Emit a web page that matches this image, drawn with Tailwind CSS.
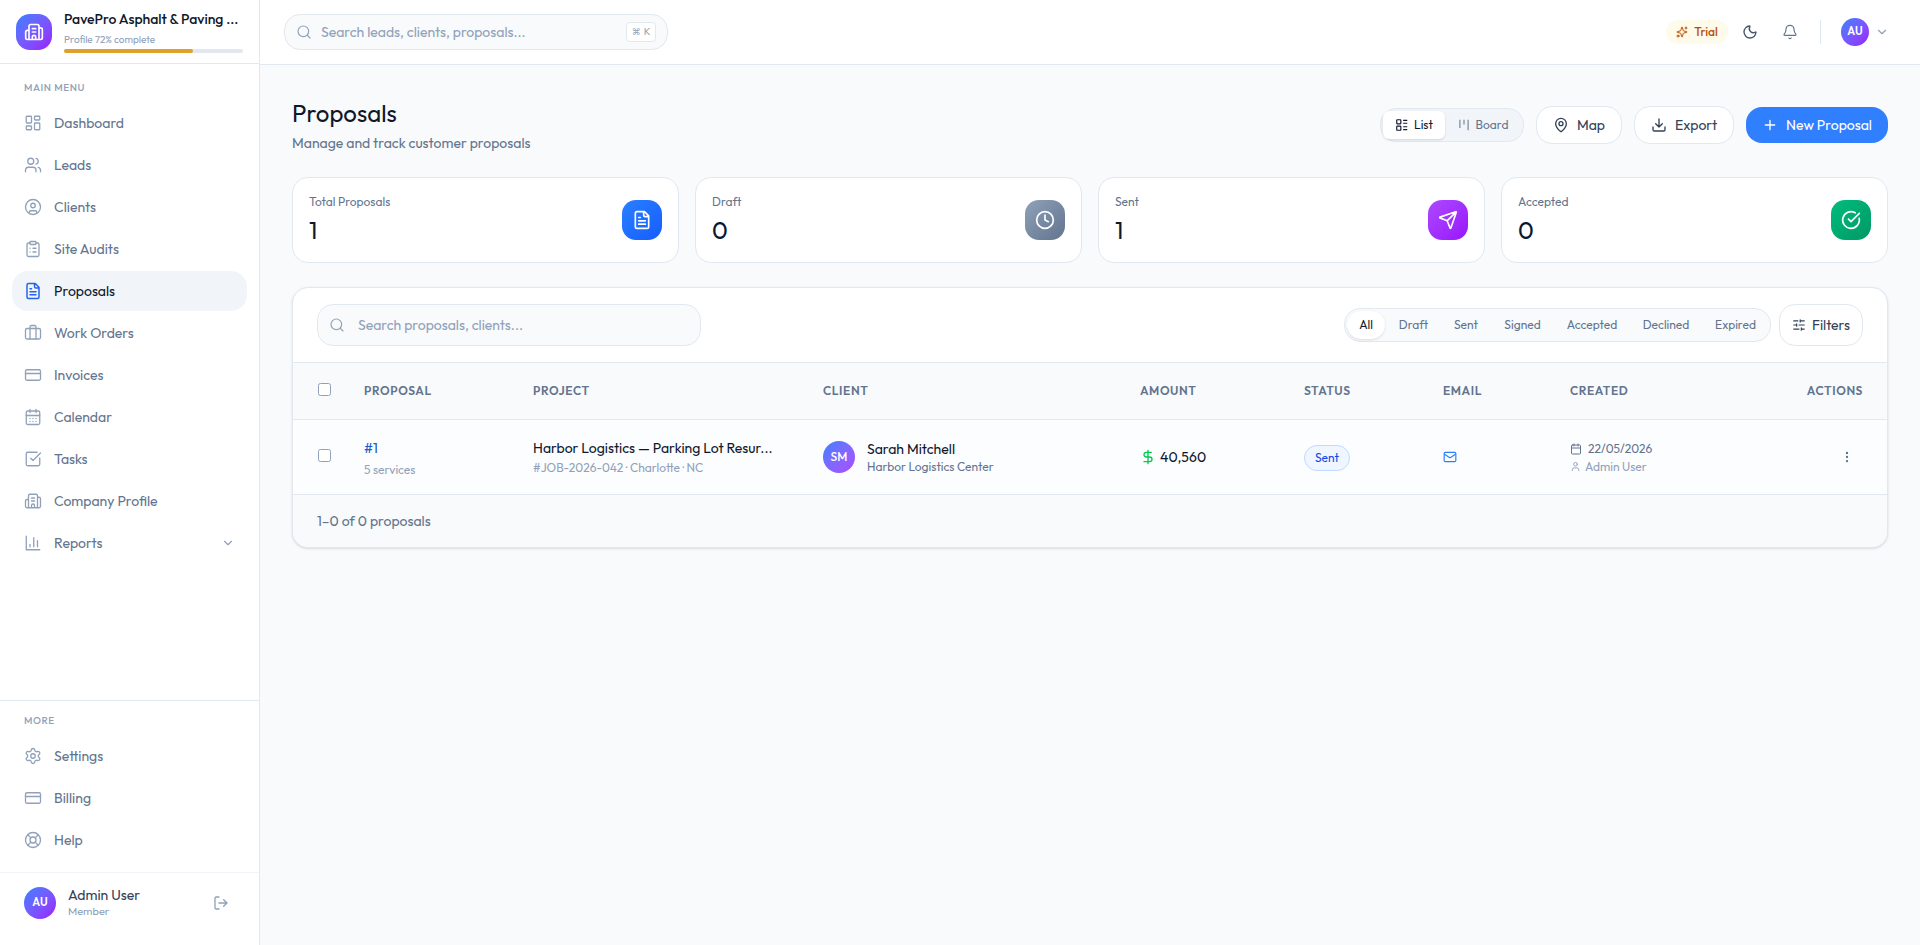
<!DOCTYPE html>
<html lang="en">

<head>
    <meta charset="UTF-8">
    <meta name="viewport" content="width=device-width, initial-scale=1.0">
    <title>Proposals</title>
    <script src="https://cdn.jsdelivr.net/npm/@tailwindcss/browser@4"></script>
</head>

<body class="bg-slate-50 flex h-[945px] overflow-hidden font-[Outfit,Lato,sans-serif] text-sm text-slate-900">

    <!-- Icon sprite -->
    <svg class="hidden">
        <symbol id="building" viewBox="0 0 24 24"><path d="M10 12h4M10 8h4M14 21v-3a2 2 0 0 0-4 0v3M6 10H4a2 2 0 0 0-2 2v7a2 2 0 0 0 2 2h16a2 2 0 0 0 2-2V9a2 2 0 0 0-2-2h-2M6 21V5a2 2 0 0 1 2-2h8a2 2 0 0 1 2 2v16" /></symbol>
        <symbol id="dashboard" viewBox="0 0 24 24"><rect x="3" y="3" width="7" height="9" rx="1" /><rect x="14" y="3" width="7" height="5" rx="1" /><rect x="14" y="12" width="7" height="9" rx="1" /><rect x="3" y="16" width="7" height="5" rx="1" /></symbol>
        <symbol id="users" viewBox="0 0 24 24"><path d="M16 21v-2a4 4 0 0 0-4-4H6a4 4 0 0 0-4 4v2M16 3.128a4 4 0 0 1 0 7.744M22 21v-2a4 4 0 0 0-3-3.87" /><circle cx="9" cy="7" r="4" /></symbol>
        <symbol id="user-circle" viewBox="0 0 24 24"><circle cx="12" cy="12" r="10" /><circle cx="12" cy="10" r="3" /><path d="M7 20.662V19a2 2 0 0 1 2-2h6a2 2 0 0 1 2 2v1.662" /></symbol>
        <symbol id="clipboard" viewBox="0 0 24 24"><rect x="8" y="2" width="8" height="4" rx="1" /><path d="M16 4h2a2 2 0 0 1 2 2v14a2 2 0 0 1-2 2H6a2 2 0 0 1-2-2V6a2 2 0 0 1 2-2h2M12 11h4M12 16h4M8 11h.01M8 16h.01" /></symbol>
        <symbol id="file" viewBox="0 0 24 24"><path d="M15 2H6a2 2 0 0 0-2 2v16a2 2 0 0 0 2 2h12a2 2 0 0 0 2-2V7ZM14 2v4a2 2 0 0 0 2 2h4M10 9H8M16 13H8M16 17H8" /></symbol>
        <symbol id="briefcase" viewBox="0 0 24 24"><path d="M16 20V4a2 2 0 0 0-2-2h-4a2 2 0 0 0-2 2v16" /><rect x="2" y="6" width="20" height="14" rx="2" /></symbol>
        <symbol id="card" viewBox="0 0 24 24"><rect x="2" y="5" width="20" height="14" rx="2" /><path d="M2 10h20" /></symbol>
        <symbol id="calendar-days" viewBox="0 0 24 24"><rect x="3" y="4" width="18" height="18" rx="2" /><path d="M8 2v4M16 2v4M3 10h18M8 14h.01M12 14h.01M16 14h.01M8 18h.01M12 18h.01M16 18h.01" /></symbol>
        <symbol id="check-square" viewBox="0 0 24 24"><path d="M21 10.5V19a2 2 0 0 1-2 2H5a2 2 0 0 1-2-2V5a2 2 0 0 1 2-2h12.5M9 11l3 3L22 4" /></symbol>
        <symbol id="chart" viewBox="0 0 24 24"><path d="M3 3v18h18M18 17V9M13 17V5M8 17v-3" /></symbol>
        <symbol id="chevron" viewBox="0 0 24 24"><path d="m6 9 6 6 6-6" /></symbol>
        <symbol id="settings" viewBox="0 0 24 24"><path d="M9.671 4.136a2.34 2.34 0 0 1 4.659 0 2.34 2.34 0 0 0 3.319 1.915 2.34 2.34 0 0 1 2.33 4.033 2.34 2.34 0 0 0 0 3.831 2.34 2.34 0 0 1-2.33 4.033 2.34 2.34 0 0 0-3.319 1.915 2.34 2.34 0 0 1-4.659 0 2.34 2.34 0 0 0-3.32-1.915 2.34 2.34 0 0 1-2.33-4.033 2.34 2.34 0 0 0 0-3.831A2.34 2.34 0 0 1 6.35 6.051a2.34 2.34 0 0 0 3.319-1.915" /><circle cx="12" cy="12" r="3" /></symbol>
        <symbol id="help" viewBox="0 0 24 24"><circle cx="12" cy="12" r="10" /><circle cx="12" cy="12" r="4" /><path d="m4.93 4.93 4.24 4.24M14.83 9.17l4.24-4.24M14.83 14.83l4.24 4.24M9.17 14.83l-4.24 4.24" /></symbol>
        <symbol id="logout" viewBox="0 0 24 24"><path d="m16 17 5-5-5-5M21 12H9M9 21H5a2 2 0 0 1-2-2V5a2 2 0 0 1 2-2h4" /></symbol>
        <symbol id="search" viewBox="0 0 24 24"><circle cx="11" cy="11" r="8" /><path d="m21 21-4.34-4.34" /></symbol>
        <symbol id="sparkles" viewBox="0 0 24 24"><path d="M11.017 2.814a1 1 0 0 1 1.966 0l1.051 5.558a2 2 0 0 0 1.594 1.594l5.558 1.051a1 1 0 0 1 0 1.966l-5.558 1.051a2 2 0 0 0-1.594 1.594l-1.051 5.558a1 1 0 0 1-1.966 0l-1.051-5.558a2 2 0 0 0-1.594-1.594l-5.558-1.051a1 1 0 0 1 0-1.966l5.558-1.051a2 2 0 0 0 1.594-1.594zM20 2v4M22 4h-4" /><circle cx="4" cy="20" r="2" /></symbol>
        <symbol id="moon" viewBox="0 0 24 24"><path d="M20.985 12.486a9 9 0 1 1-9.473-9.472c.405-.022.617.46.402.803a6 6 0 0 0 8.268 8.268c.344-.215.825-.004.803.401" /></symbol>
        <symbol id="bell" viewBox="0 0 24 24"><path d="M10.268 21a2 2 0 0 0 3.464 0M3.262 15.326A1 1 0 0 0 4 17h16a1 1 0 0 0 .74-1.673C19.41 13.956 18 12.499 18 8A6 6 0 0 0 6 8c0 4.499-1.411 5.956-2.738 7.326" /></symbol>
        <symbol id="list" viewBox="0 0 24 24"><rect x="3" y="3" width="7" height="7" rx="1" /><rect x="3" y="14" width="7" height="7" rx="1" /><path d="M14 4h7M14 9h7M14 15h7M14 20h7" /></symbol>
        <symbol id="kanban" viewBox="0 0 24 24"><path d="M5 3v14M12 3v8M19 3v18" /></symbol>
        <symbol id="pin" viewBox="0 0 24 24"><path d="M20 10c0 4.993-5.539 10.193-7.399 11.799a1 1 0 0 1-1.202 0C9.539 20.193 4 14.993 4 10a8 8 0 0 1 16 0" /><circle cx="12" cy="10" r="3" /></symbol>
        <symbol id="download" viewBox="0 0 24 24"><path d="M12 15V3M21 15v4a2 2 0 0 1-2 2H5a2 2 0 0 1-2-2v-4M7 10l5 5 5-5" /></symbol>
        <symbol id="plus" viewBox="0 0 24 24"><path d="M5 12h14M12 5v14" /></symbol>
        <symbol id="clock" viewBox="0 0 24 24"><circle cx="12" cy="12" r="10" /><path d="M12 6v6l4 2" /></symbol>
        <symbol id="send" viewBox="0 0 24 24"><path d="M14.536 21.686a.5.5 0 0 0 .937-.024l6.5-19a.496.496 0 0 0-.635-.635l-19 6.5a.5.5 0 0 0-.024.937l7.93 3.18a2 2 0 0 1 1.112 1.11zM21.854 2.147l-10.94 10.939" /></symbol>
        <symbol id="check-circle" viewBox="0 0 24 24"><path d="M21.801 10A10 10 0 1 1 17 3.335M9 11l3 3L22 4" /></symbol>
        <symbol id="sliders" viewBox="0 0 24 24"><path d="M10 5H3M12 19H3M14 3v4M16 17v4M21 12h-9M21 19h-5M21 5h-7M8 10v4M8 12H3" /></symbol>
        <symbol id="dollar" viewBox="0 0 24 24"><path d="M12 2v20M17 5H9.5a3.5 3.5 0 0 0 0 7h5a3.5 3.5 0 0 1 0 7H6" /></symbol>
        <symbol id="mail" viewBox="0 0 24 24"><rect x="2" y="4" width="20" height="16" rx="2" /><path d="m22 7-8.991 5.727a2 2 0 0 1-2.009 0L2 7" /></symbol>
        <symbol id="calendar" viewBox="0 0 24 24"><rect x="3" y="4" width="18" height="18" rx="2" /><path d="M8 2v4M16 2v4M3 10h18" /></symbol>
        <symbol id="user" viewBox="0 0 24 24"><path d="M19 21v-2a4 4 0 0 0-4-4H9a4 4 0 0 0-4 4v2" /><circle cx="12" cy="7" r="4" /></symbol>
        <symbol id="dots" viewBox="0 0 24 24"><circle cx="12" cy="12" r="1" /><circle cx="12" cy="5" r="1" /><circle cx="12" cy="19" r="1" /></symbol>
    </svg>

    <!-- Sidebar -->
    <aside class="w-[260px] shrink-0 bg-white border-r border-slate-200 flex flex-col">
        <div class="h-16 shrink-0 border-b border-slate-200 flex items-center gap-3 px-4">
            <div class="size-9 shrink-0 rounded-[14px] bg-linear-to-br from-blue-500 to-purple-600 flex items-center justify-center text-white">
                <svg class="size-5 fill-none stroke-current stroke-2" stroke-linecap="round" stroke-linejoin="round"><use href="#building" /></svg>
            </div>
            <div class="flex-1 min-w-0 pb-px">
                <p class="leading-5 font-medium whitespace-nowrap tracking-[-0.03px]">PavePro Asphalt &amp; Paving ...</p>
                <p class="mt-[3px] text-[10px] leading-4 text-slate-400">Profile 72% complete</p>
                <div class="mt-px h-1 rounded-full bg-slate-200"><div class="h-1 rounded-full bg-[#e0a02c]" style="width: 72%"></div></div>
            </div>
        </div>

        <nav class="flex-1 px-3 pt-4 text-slate-500">
            <p class="px-3 text-[10px] leading-4 font-medium tracking-[0.6px] text-slate-400 mb-[7px]">MAIN MENU</p>
            <div class="space-y-0.5" id="mainMenu"></div>
        </nav>

        <div class="border-t border-slate-200 px-3 pt-3 pb-3 h-[172px] text-slate-500">
            <p class="px-3 text-[10px] leading-4 font-medium tracking-[0.6px] text-slate-400 mb-[7px]">MORE</p>
            <div class="space-y-0.5" id="moreMenu"></div>
        </div>

        <div class="border-t border-slate-100 h-[73px] px-6 pt-[14px] flex items-start gap-3">
            <div class="size-8 rounded-full bg-linear-to-br from-blue-500 to-purple-600 flex items-center justify-center text-white text-[11px] font-semibold">AU</div>
            <div class="flex-1">
                <p class="leading-[17px] text-slate-700">Admin User</p>
                <p class="text-[11px] leading-[15px] text-slate-400">Member</p>
            </div>
            <svg class="size-4 mt-2 mr-[6px] fill-none stroke-slate-400 stroke-2" stroke-linecap="round" stroke-linejoin="round"><use href="#logout" /></svg>
        </div>
    </aside>

    <div class="flex-1 flex flex-col">
        <!-- Top bar -->
        <header class="h-[65px] shrink-0 bg-white border-b border-slate-200 flex items-center justify-between pl-6 pr-[31px]">
            <div class="w-96 h-9 rounded-2xl border border-slate-200 bg-slate-50 flex items-center gap-[9px] px-[11px] text-slate-400">
                <svg class="size-4 fill-none stroke-current stroke-[1.75]" stroke-linecap="round"><use href="#search" /></svg>
                <span class="flex-1">Search leads, clients, proposals...</span>
                <kbd class="w-[30px] h-5 rounded border border-slate-200 bg-white flex items-center justify-center gap-[3px] text-[10px] font-[Outfit,'DejaVu_Sans',sans-serif]"><span class="text-[9px]">⌘</span>K</kbd>
            </div>
            <div class="flex items-center text-slate-600">
                <div class="w-[62px] h-6 rounded-full bg-amber-50 flex items-center justify-center gap-1.5 text-xs font-medium text-amber-700">
                    <svg class="size-3 fill-none stroke-current stroke-2" stroke-linecap="round" stroke-linejoin="round"><use href="#sparkles" /></svg>Trial
                </div>
                <svg class="size-4 ml-[14px] fill-none stroke-current stroke-2" stroke-linecap="round" stroke-linejoin="round"><use href="#moon" /></svg>
                <svg class="size-4 ml-6 fill-none stroke-slate-500 stroke-[1.75]" stroke-linecap="round" stroke-linejoin="round"><use href="#bell" /></svg>
                <div class="w-px h-6 bg-slate-200 ml-[22px] mr-5"></div>
                <div class="size-7 rounded-full bg-linear-to-br from-blue-500 to-purple-600 flex items-center justify-center text-white text-[11px] font-semibold">AU</div>
                <svg class="size-3.5 ml-[6px] fill-none stroke-slate-400 stroke-2" stroke-linecap="round" stroke-linejoin="round"><use href="#chevron" /></svg>
            </div>
        </header>

        <main class="px-8 pt-8">
            <div class="flex items-center justify-between h-14">
                <div>
                    <h1 class="text-2xl leading-8">Proposals</h1>
                    <p class="mt-1 leading-5 text-slate-500">Manage and track customer proposals</p>
                </div>
                <div class="flex items-center gap-3 text-slate-700">
                    <div class="w-36 h-[34px] rounded-2xl border border-slate-200 bg-slate-100 flex items-center p-0.5 text-xs">
                        <div class="w-[62px] h-7 rounded-md bg-white shadow-sm flex items-center justify-center gap-[5px] text-slate-900">
                            <svg class="size-3.5 fill-none stroke-current stroke-2"><use href="#list" /></svg>List
                        </div>
                        <div class="flex-1 flex items-center justify-center gap-[5px] pr-px text-slate-500">
                            <svg class="size-3.5 fill-none stroke-current stroke-[1.75]"><use href="#kanban" /></svg>Board
                        </div>
                    </div>
                    <button class="w-[86px] h-[38px] rounded-2xl border border-slate-200 bg-white flex items-center justify-center gap-2">
                        <svg class="size-4 fill-none stroke-current stroke-2" stroke-linecap="round" stroke-linejoin="round"><use href="#pin" /></svg>Map
                    </button>
                    <button class="w-[100px] h-[38px] rounded-2xl border border-slate-200 bg-white flex items-center justify-center gap-2">
                        <svg class="size-4 fill-none stroke-current stroke-2" stroke-linecap="round" stroke-linejoin="round"><use href="#download" /></svg>Export
                    </button>
                    <button class="w-[142px] h-9 rounded-2xl bg-[#2f7fff] text-white flex items-center justify-center gap-2">
                        <svg class="size-4 fill-none stroke-current stroke-2" stroke-linecap="round"><use href="#plus" /></svg>New Proposal
                    </button>
                </div>
            </div>

            <!-- Stats -->
            <div class="grid grid-cols-4 gap-4 mt-6" id="stats"></div>

            <!-- Proposals table -->
            <section class="mt-6 rounded-2xl border border-slate-200 bg-white shadow-sm overflow-hidden">
                <div class="h-[74px] px-6 flex items-center justify-between">
                    <div class="w-96 h-[42px] rounded-2xl border border-slate-200 bg-slate-50 flex items-center gap-[13px] px-[11px] text-slate-400">
                        <svg class="size-4 fill-none stroke-current stroke-[1.75]" stroke-linecap="round"><use href="#search" /></svg>
                        Search proposals, clients...
                    </div>
                    <div class="flex items-center gap-2">
                        <div class="h-[34px] rounded-2xl border border-slate-200 bg-slate-50 flex items-center gap-0.5 p-0.5 text-xs text-slate-500">
                            <div class="w-[38px] h-7 rounded-full bg-white shadow-sm flex items-center justify-center text-slate-900">All</div>
                            <div class="w-[53px] text-center">Draft</div>
                            <div class="w-[48px] text-center">Sent</div>
                            <div class="w-[61px] text-center">Signed</div>
                            <div class="w-[74px] text-center">Accepted</div>
                            <div class="w-[70px] text-center">Declined</div>
                            <div class="w-[65px] text-center">Expired</div>
                        </div>
                        <button class="w-[84px] h-[42px] rounded-2xl border border-slate-200 bg-white flex items-center justify-center gap-1.5 text-slate-700">
                            <svg class="size-3.5 fill-none stroke-current stroke-2" stroke-linecap="round"><use href="#sliders" /></svg>Filters
                        </button>
                    </div>
                </div>
                <table class="w-full table-fixed text-left">
                    <thead>
                        <tr class="h-[57px] border-y border-slate-200 bg-slate-50 text-xs text-slate-500 tracking-wider">
                            <th class="w-[71px] pl-[25px]"><div class="size-[13px] rounded-[2.5px] border border-slate-400 bg-white -mt-1"></div></th>
                            <th class="w-[169px] font-semibold">PROPOSAL</th>
                            <th class="w-[290px] font-semibold">PROJECT</th>
                            <th class="w-[317px] font-semibold">CLIENT</th>
                            <th class="w-[164px] font-semibold">AMOUNT</th>
                            <th class="w-[139px] font-semibold">STATUS</th>
                            <th class="w-[127px] font-semibold">EMAIL</th>
                            <th class="font-semibold">CREATED</th>
                            <th class="pr-6 text-right font-semibold">ACTIONS</th>
                        </tr>
                    </thead>
                    <tbody>
                        <tr class="h-[75px] border-b border-slate-200 bg-[#fcfdfe]">
                            <td class="pl-[25px]"><div class="size-[13px] rounded-[2.5px] border border-slate-400 bg-white -mt-1"></div></td>
                            <td class="pt-0.5">
                                <p class="leading-5 text-[#2158c4]">#1</p>
                                <p class="mt-1 text-xs leading-4 text-slate-400">5 services</p>
                            </td>
                            <td>
                                <p class="leading-5">Harbor Logistics — Parking Lot Resur...</p>
                                <p class="text-xs leading-[19px] text-slate-400">#JOB-2026-042 · Charlotte · NC</p>
                            </td>
                            <td>
                                <div class="flex items-center gap-3">
                                    <div class="size-8 rounded-full bg-linear-to-br from-blue-500 to-purple-500 flex items-center justify-center text-white text-xs font-medium">SM</div>
                                    <div>
                                        <p class="leading-5">Sarah Mitchell</p>
                                        <p class="text-xs leading-4 text-slate-500">Harbor Logistics Center</p>
                                    </div>
                                </div>
                            </td>
                            <td>
                                <div class="flex items-center gap-1">
                                    <svg class="size-4 fill-none stroke-green-500 stroke-2" stroke-linecap="round" stroke-linejoin="round"><use href="#dollar" /></svg>
                                    <span class="tracking-[0.1px]">40,560</span>
                                </div>
                            </td>
                            <td><div class="w-[46px] h-[26px] mt-0.5 rounded-full border border-blue-200 bg-blue-50 flex items-center justify-center text-xs text-blue-700">Sent</div></td>
                            <td><svg class="size-3.5 fill-none stroke-blue-500 stroke-2" stroke-linejoin="round"><use href="#mail" /></svg></td>
                            <td class="pt-px text-xs">
                                <p class="flex items-center gap-1.5 leading-[18px] text-slate-500"><svg class="size-3 fill-none stroke-current stroke-2" stroke-linecap="round"><use href="#calendar" /></svg>22/05/2026</p>
                                <p class="flex items-center gap-1 leading-[18px] text-slate-400"><svg class="size-[11px] fill-none stroke-current stroke-2" stroke-linecap="round"><use href="#user" /></svg>Admin User</p>
                            </td>
                            <td class="pr-[33px]"><svg class="size-3.5 ml-auto fill-none stroke-slate-500 stroke-2"><use href="#dots" /></svg></td>
                        </tr>
                    </tbody>
                </table>
                <div class="h-[52px] px-6 flex items-center bg-slate-50 text-slate-500">1–0 of 0 proposals</div>
            </section>
        </main>
    </div>

    <script>
        const icon = (name, cls) => `<svg class="${cls}" stroke-linecap="round" stroke-linejoin="round"><use href="#${name}" /></svg>`;

        const navItem = ([name, label]) => {
            const active = label === "Proposals";
            return `<a class="h-10 px-3 rounded-2xl flex items-center gap-3 ${active ? "bg-slate-100 text-slate-900" : ""}">
                ${icon(name, active ? "size-[18px] fill-none stroke-2 stroke-[#2563eb]" : "size-[18px] fill-none stroke-[1.75] stroke-slate-400")}
                <span>${label}</span>
                ${label === "Reports" ? icon("chevron", "size-3.5 ml-auto fill-none stroke-slate-400 stroke-2") : ""}
            </a>`;
        };

        document.getElementById("mainMenu").innerHTML = [
            ["dashboard", "Dashboard"],
            ["users", "Leads"],
            ["user-circle", "Clients"],
            ["clipboard", "Site Audits"],
            ["file", "Proposals"],
            ["briefcase", "Work Orders"],
            ["card", "Invoices"],
            ["calendar-days", "Calendar"],
            ["check-square", "Tasks"],
            ["building", "Company Profile"],
            ["chart", "Reports"],
        ].map(navItem).join("");

        document.getElementById("moreMenu").innerHTML = [
            ["settings", "Settings"],
            ["card", "Billing"],
            ["help", "Help"],
        ].map(navItem).join("");

        document.getElementById("stats").innerHTML = [
            ["Total Proposals", 1, "file", "from-blue-500 to-blue-600"],
            ["Draft", 0, "clock", "from-slate-400 to-slate-500"],
            ["Sent", 1, "send", "from-purple-500 to-purple-600"],
            ["Accepted", 0, "check-circle", "from-emerald-500 to-emerald-600"],
        ].map(([label, count, name, colors]) => `
            <div class="h-[86px] rounded-2xl border border-slate-200 bg-white px-4 flex items-center justify-between">
                <div>
                    <p class="text-xs leading-4 text-slate-500">${label}</p>
                    <p class="mt-1 text-2xl leading-8">${count}</p>
                </div>
                <div class="size-10 rounded-[14px] bg-linear-to-br ${colors} flex items-center justify-center text-white">
                    ${icon(name, "size-5 fill-none stroke-current stroke-2")}
                </div>
            </div>`).join("");
    </script>

</body>

</html>
